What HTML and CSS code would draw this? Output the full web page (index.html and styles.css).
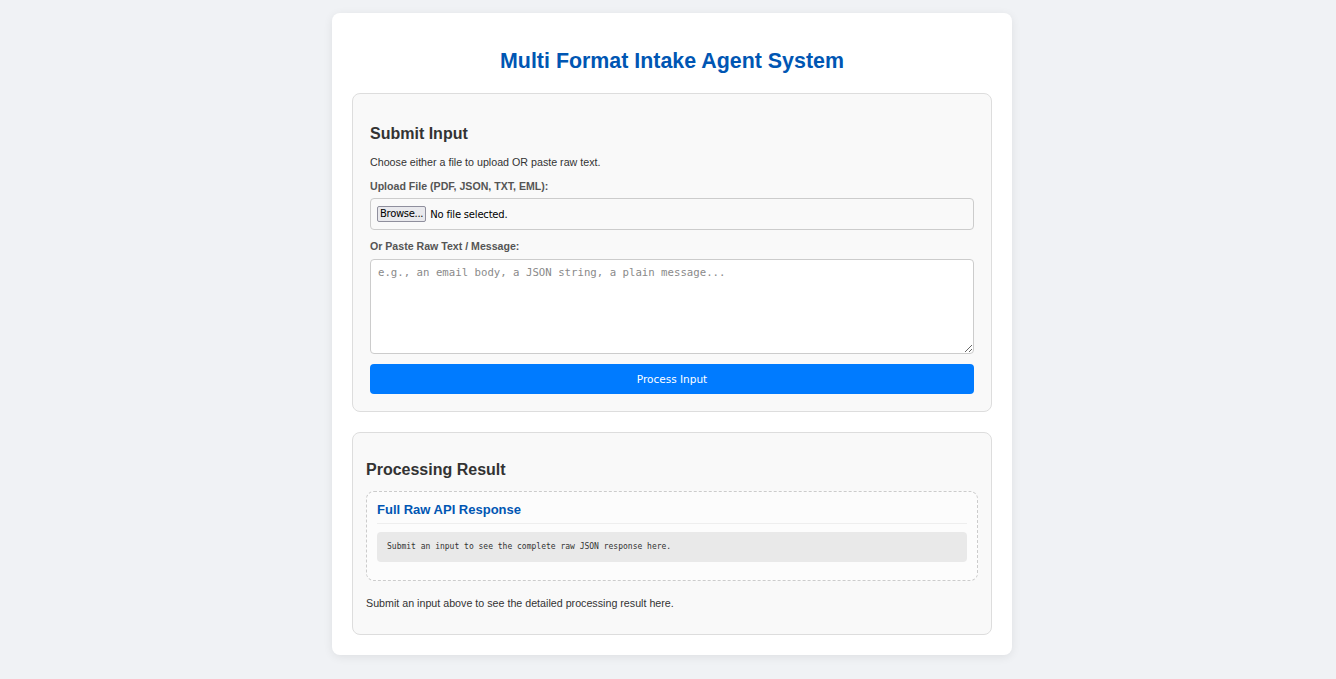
FILE: index.html
```html
<!DOCTYPE html>
<html>
<head>
<meta charset="utf-8">
<link rel="stylesheet" href="styles.css">
</head>
<body>
<div class="container">
  <h1 class="title">Multi Format Intake Agent System</h1>
  <section class="card input-card">
    <h2 class="card-title">Submit Input</h2>
    <p class="hint">Choose either a file to upload OR paste raw text.</p>
    <label class="label">Upload File (PDF, JSON, TXT, EML):</label>
    <div class="file-box">
      <span class="browse">Browse...</span>
      <span class="file-status">No file selected.</span>
    </div>
    <label class="label">Or Paste Raw Text / Message:</label>
    <textarea class="raw" placeholder="e.g., an email body, a JSON string, a plain message..."></textarea>
    <button class="submit">Process Input</button>
  </section>
  <section class="card result-card">
    <h2 class="card-title">Processing Result</h2>
    <div class="raw-box">
      <h3 class="raw-title">Full Raw API Response</h3>
      <pre class="raw-pre">Submit an input to see the complete raw JSON response here.</pre>
    </div>
    <p class="result-text">Submit an input above to see the detailed processing result here.</p>
  </section>
</div>
</body>
</html>
```
FILE: styles.css
```css
* { box-sizing: border-box; }
html, body { margin: 0; padding: 0; }
body {
  background: #f0f2f5;
  font-family: "Liberation Sans", Arial, sans-serif;
  color: #333;
  padding: 13px 0 24px 8px;
}
.container {
  width: 680px;
  margin: 0 auto;
  background: #fff;
  border-radius: 8px;
  box-shadow: 0 2px 10px rgba(0,0,0,0.08);
  padding: 33px 20px 20px;
}
.title {
  margin: 0 0 17px;
  text-align: center;
  color: #0056b3;
  font-size: 21.4px;
  font-weight: bold;
  line-height: 30px;
}
.card {
  background: #f9f9f9;
  border: 1px solid #ddd;
  border-radius: 8px;
}
.input-card {
  padding: 29px 17px 17px;
  display: flex;
  flex-direction: column;
}
.card-title {
  margin: 0 0 10px;
  font-size: 16px;
  line-height: 22px;
  font-weight: bold;
  color: #333;
}
.hint {
  margin: 0 0 10px;
  font-size: 10.7px;
  line-height: 14px;
}
.label {
  display: block;
  font-size: 10.6px;
  line-height: 14px;
  font-weight: bold;
  color: #555;
  margin-bottom: 5px;
}
.file-box {
  height: 32px;
  border: 1px solid #ccc;
  border-radius: 4px;
  background: #f9f9f9;
  display: flex;
  align-items: center;
  padding: 0 6px;
  margin-bottom: 9px;
  font-family: "DejaVu Sans", sans-serif;
  font-size: 10px;
}
.browse {
  border: 1px solid #8f8f9d;
  background: #e9e9ed;
  border-radius: 2px;
  padding: 1px 2px;
  color: #000;
  line-height: 12px;
  margin-right: 4px;
  letter-spacing: -0.3px;
}
.file-status { color: #000; letter-spacing: -0.2px; }
.raw {
  height: 95px;
  width: 100%;
  border: 1px solid #ccc;
  border-radius: 4px;
  background: #fff;
  padding: 6px 7px;
  font-family: "DejaVu Sans Mono", monospace;
  font-size: 10.7px;
  resize: vertical;
  margin: 1px 0 10px;
  display: block;
}
.raw::placeholder { color: #8a8a8a; }
.submit {
  height: 30px;
  border: none;
  border-radius: 4px;
  background: #007bff;
  color: #fff;
  font-family: "DejaVu Sans", sans-serif;
  font-size: 10.5px;
  width: 100%;
  padding: 0;
}
.result-card {
  margin-top: 20px;
  padding: 26px 13px 24px;
}
.result-card .card-title { margin-bottom: 10px; }
.raw-box {
  border: 1px dashed #ccc;
  border-radius: 8px;
  background: #fcfcfc;
  padding: 10px 10px 18px;
}
.raw-title {
  margin: 0 0 8px;
  font-size: 13px;
  line-height: 16px;
  color: #0056b3;
  font-weight: bold;
  padding-bottom: 5px;
  border-bottom: 1px solid #eee;
}
.raw-pre {
  margin: 0;
  background: #e9e9e9;
  border-radius: 4px;
  padding: 10px 10px;
  font-family: "DejaVu Sans Mono", monospace;
  font-size: 8px;
  line-height: 10px;
  color: #333;
}
.result-text {
  margin: 15px 0 0;
  font-size: 10.7px;
  line-height: 14px;
}
```
